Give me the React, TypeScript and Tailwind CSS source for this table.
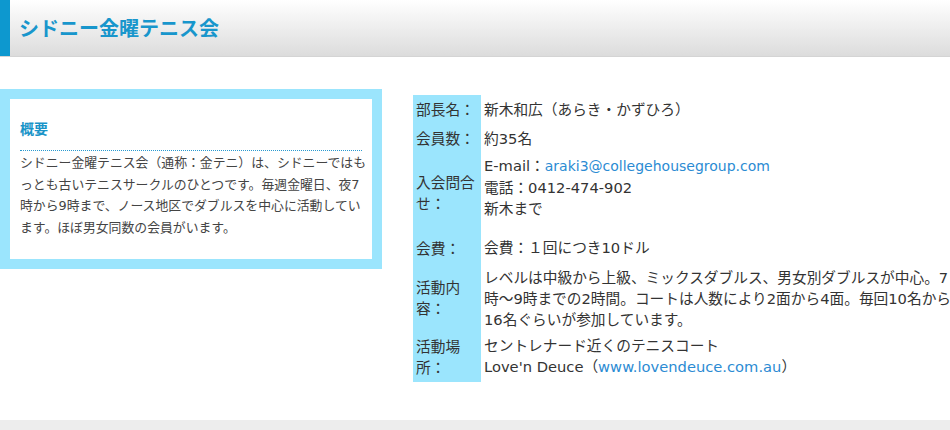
import React from 'react';

interface InfoRow {
  label: React.ReactNode;
  value: React.ReactNode;
  pad: string;
}

const linkClass = 'text-[#2b8bd3]';

const rows: InfoRow[] = [
  { label: '部長名：', value: '新木和広（あらき・かずひろ）', pad: 'pt-[4px] pb-[4px]' },
  { label: '会員数：', value: '約35名', pad: 'pt-[4px] pb-[4px]' },
  {
    label: (
      <>
        入会問合
        <br />
        せ：
      </>
    ),
    value: (
      <>
        E-mail：<span className={`${linkClass} text-[14px]`}>araki3@collegehousegroup.com</span>
        <br />
        電話：0412-474-902
        <br />
        新木まで
      </>
    ),
    pad: 'pt-[2px] pb-[14px]',
  },
  { label: '会費：', value: '会費：１回につき10ドル', pad: 'pt-[4px] pb-[6px]' },
  {
    label: (
      <>
        活動内
        <br />
        容：
      </>
    ),
    value: (
      <>
        レベルは中級から上級、ミックスダブルス、男女別ダブルスが中心。7
        <br />
        時～9時までの2時間。コートは人数により2面から4面。毎回10名から
        <br />
        16名ぐらいが参加しています。
      </>
    ),
    pad: 'pt-[3px] pb-[1px]',
  },
  {
    label: (
      <>
        活動場
        <br />
        所：
      </>
    ),
    value: (
      <>
        セントレナード近くのテニスコート
        <br />
        Love'n Deuce（<span className={linkClass}>www.lovendeuce.com.au</span>）
      </>
    ),
    pad: 'pt-[4px] pb-[5px]',
  },
];

export default function App() {
  return (
    <div className="w-[950px] h-[430px] overflow-hidden bg-white font-['DejaVu_Sans','Noto_Sans_CJK_JP',sans-serif] text-[#333]">
      {/* Header */}
      <header className="h-[57px] flex bg-linear-to-b from-white to-[#dcdcdc] border-b border-[#d4d4d4]">
        <div className="w-[10px] bg-[#0d98cf]" />
        <h1 className="pl-[9px] flex items-center text-[20px] font-bold text-[#1896cc] font-['Noto_Sans_CJK_JP',sans-serif]">
          シドニー金曜テニス会
        </h1>
      </header>

      <div className="h-[363px] flex">
        {/* Overview */}
        <div className="mt-[32px] w-[382px] h-[180px] bg-[#9be5fd] p-[10px] shrink-0">
          <div className="h-full bg-white px-[10px] pt-[19px]">
            <h2 className="text-[14px] leading-[20px] font-bold text-[#1a94c8] pb-[12px] border-b border-dotted border-[#2a9ad0] font-['Noto_Sans_CJK_JP',sans-serif]">
              概要
            </h2>
            <p className="mt-[1px] text-[12.85px] leading-[21.5px] whitespace-nowrap text-[#444]">
              シドニー金曜テニス会（通称：金テニ）は、シドニーではも
              <br />
              っとも古いテニスサークルのひとつです。毎週金曜日、夜7
              <br />
              時から9時まで、ノース地区でダブルスを中心に活動してい
              <br />
              ます。ほぼ男女同数の会員がいます。
            </p>
          </div>
        </div>

        {/* Info table */}
        <div className="ml-[31px] mt-[38px] grid grid-cols-[68px_500px] self-start text-[14.7px] leading-[21px] whitespace-nowrap">
          {rows.map((row, i) => (
            <React.Fragment key={i}>
              <div className="bg-[#9be5fd] px-[3px] flex items-center">
                <span>{row.label}</span>
              </div>
              <div className={`px-[3px] ${row.pad}`}>{row.value}</div>
            </React.Fragment>
          ))}
        </div>
      </div>

      <footer className="h-[40px] bg-[#ededed]" />
    </div>
  );
}
